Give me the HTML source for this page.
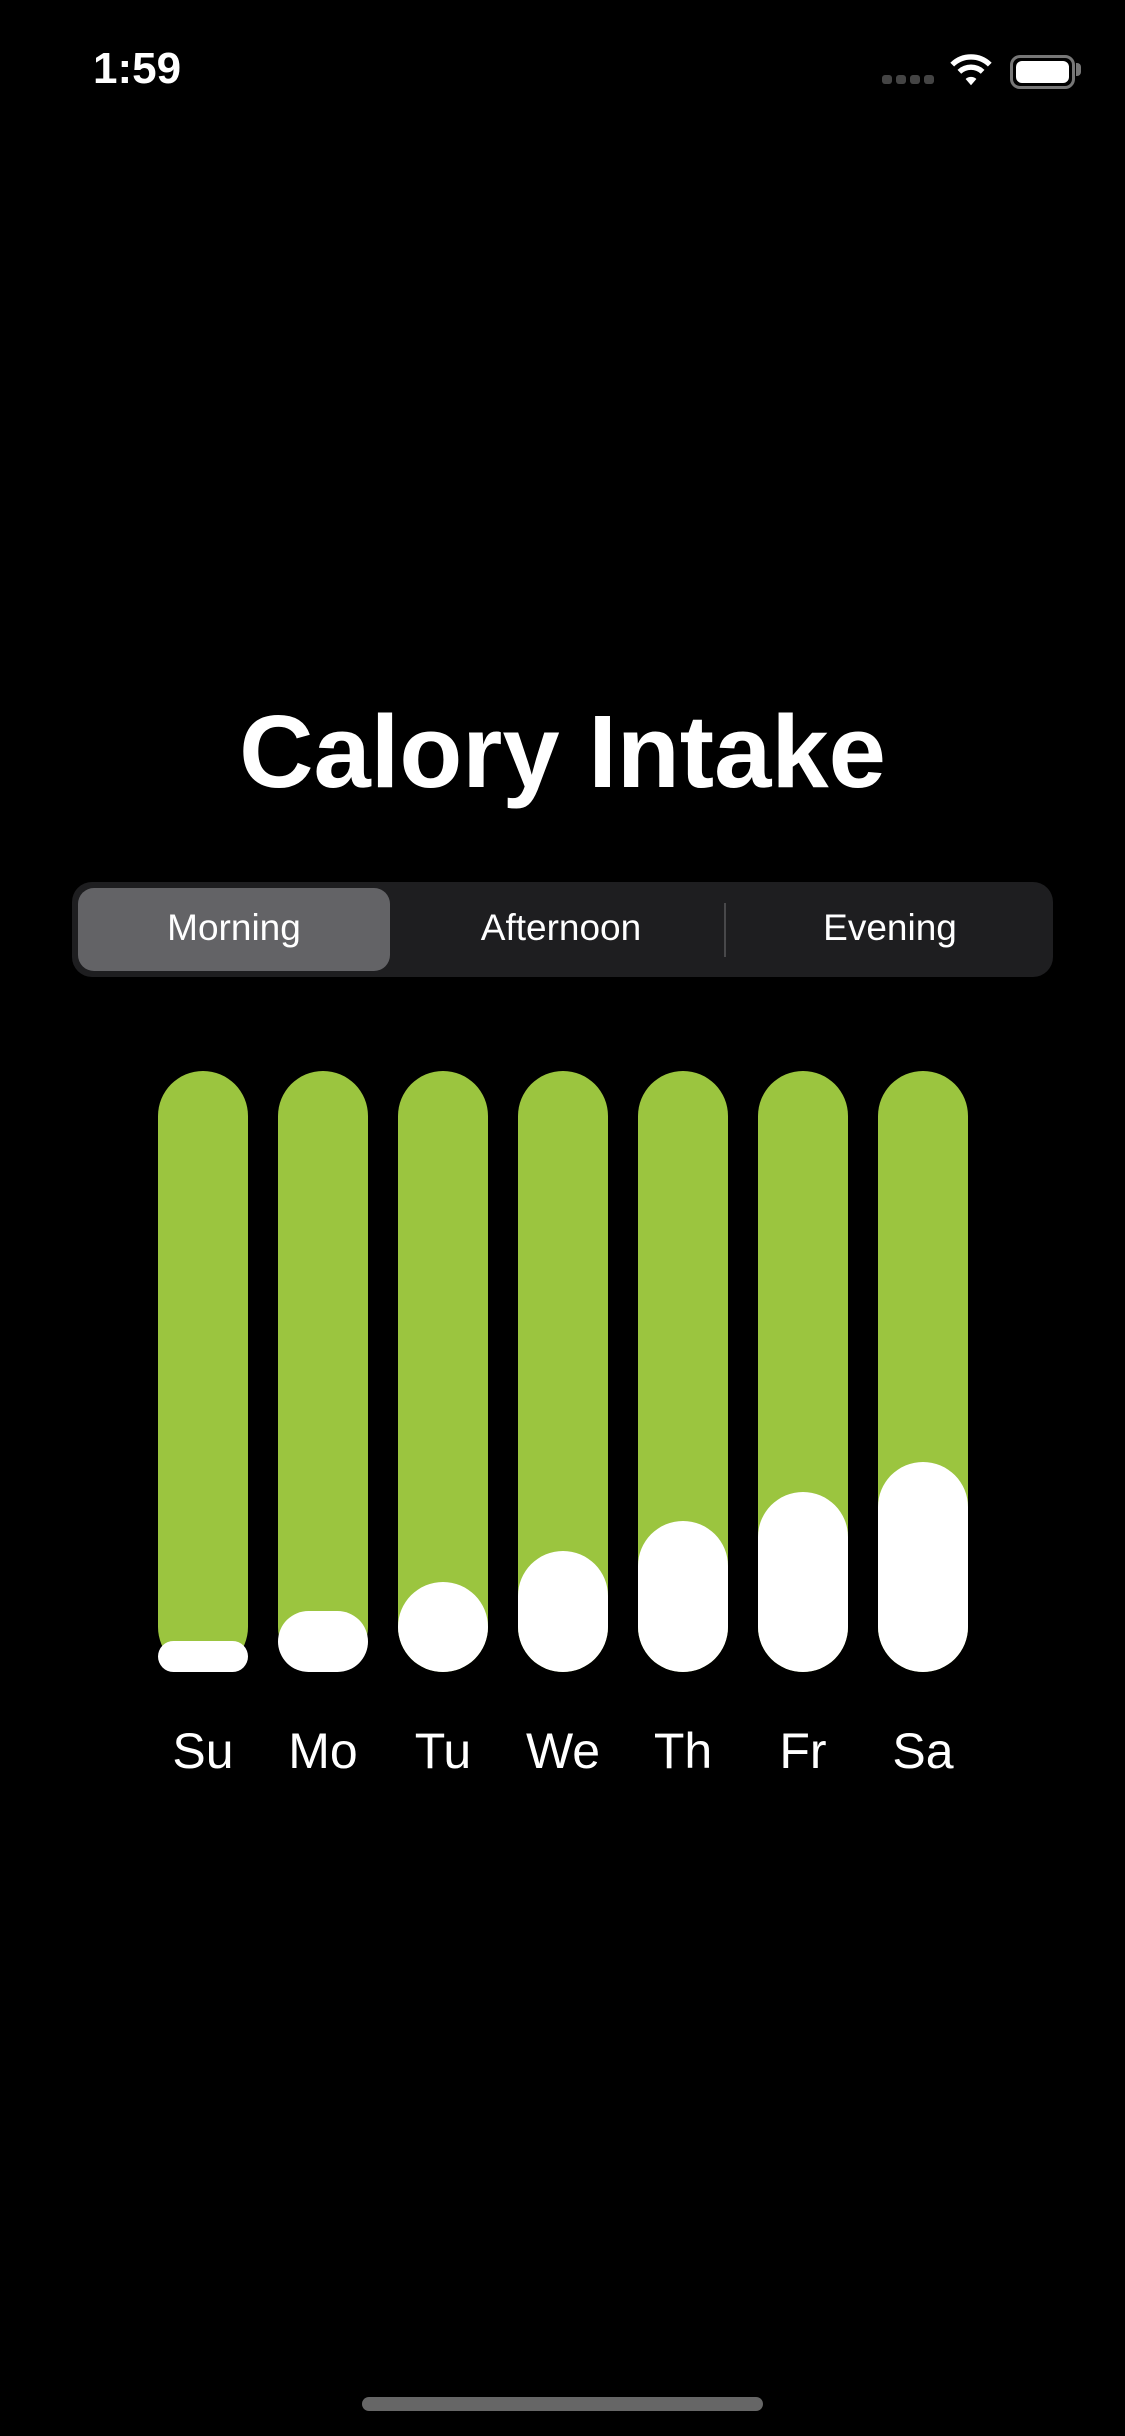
<!DOCTYPE html>
<html><head><meta charset="utf-8"><style>
body{margin:0;width:1125px;height:2436px;background:#000;position:relative;overflow:hidden;font-family:"Liberation Sans",sans-serif;color:#fff}
.a{position:absolute}
.bar{position:absolute;top:1071px;width:90px;height:601px;border-radius:45px;background:#9bc53f}
.w{position:absolute;left:0;bottom:0;width:90px;background:#fff;border-radius:999px}
.lbl{position:absolute;top:1722px;width:140px;text-align:center;font-size:50px}
.seg{position:absolute;top:907px;font-size:37px;text-align:center;width:300px}
</style></head><body>
<div class="a" style="left:93px;top:44px;font-size:44px;font-weight:bold">1:59</div>
<div class="a" style="left:882px;top:75px;width:52px;height:9px;display:flex;gap:4px">
<span style="width:10px;height:9px;background:#444;border-radius:3px"></span><span style="width:10px;height:9px;background:#444;border-radius:3px"></span><span style="width:10px;height:9px;background:#444;border-radius:3px"></span><span style="width:10px;height:9px;background:#444;border-radius:3px"></span></div>
<svg class="a" style="left:950px;top:53px" width="42" height="34" viewBox="0 0 46 38"><path d="M2 13 A30 30 0 0 1 44 13" stroke="#fff" stroke-width="6" fill="none"/><path d="M10 21 A19 19 0 0 1 36 21" stroke="#fff" stroke-width="6" fill="none"/><path d="M17 29 L23 36 L29 29 A9 9 0 0 0 17 29Z" fill="#fff"/></svg>
<div class="a" style="left:1010px;top:55px;width:59px;height:28px;border:3px solid #777;border-radius:10px"></div>
<div class="a" style="left:1016px;top:61px;width:53px;height:22px;background:#fff;border-radius:6px"></div>
<div class="a" style="left:1076px;top:63px;width:5px;height:13px;background:#777;border-radius:0 4px 4px 0"></div>
<div class="a" style="left:0;width:1125px;top:693px;text-align:center;font-size:103px;font-weight:bold">Calory Intake</div>
<div class="a" style="left:72px;top:882px;width:981px;height:95px;background:#1e1e20;border-radius:20px"></div>
<div class="a" style="left:78px;top:888px;width:312px;height:83px;background:#636366;border-radius:16px"></div>
<div class="a" style="left:724px;top:903px;width:2px;height:54px;background:#48484a"></div>
<div class="seg" style="left:84px">Morning</div>
<div class="seg" style="left:411px">Afternoon</div>
<div class="seg" style="left:740px">Evening</div>
<div class="bar" style="left:158px"><div class="w" style="height:31px"></div></div>
<div class="bar" style="left:278px"><div class="w" style="height:61px"></div></div>
<div class="bar" style="left:398px"><div class="w" style="height:90px"></div></div>
<div class="bar" style="left:518px"><div class="w" style="height:121px"></div></div>
<div class="bar" style="left:638px"><div class="w" style="height:151px"></div></div>
<div class="bar" style="left:758px"><div class="w" style="height:180px"></div></div>
<div class="bar" style="left:878px"><div class="w" style="height:210px"></div></div>
<div class="lbl" style="left:133px">Su</div>
<div class="lbl" style="left:253px">Mo</div>
<div class="lbl" style="left:373px">Tu</div>
<div class="lbl" style="left:493px">We</div>
<div class="lbl" style="left:613px">Th</div>
<div class="lbl" style="left:733px">Fr</div>
<div class="lbl" style="left:853px">Sa</div>
<div class="a" style="left:362px;top:2397px;width:401px;height:14px;background:#666;border-radius:7px"></div>
</body></html>
